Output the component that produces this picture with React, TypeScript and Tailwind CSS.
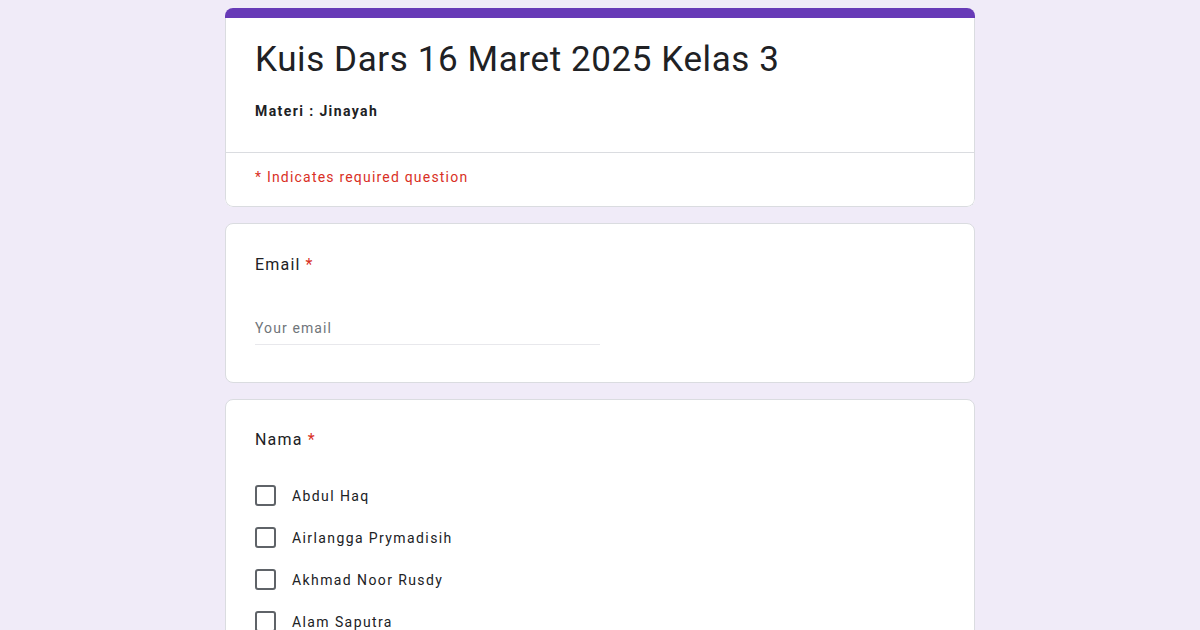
const NAMES = ["Abdul Haq", "Airlangga Prymadisih", "Akhmad Noor Rusdy", "Alam Saputra"]

const Required = () => <span className="ml-[5px] text-[#d93025]">*</span>

export default function App() {
  return (
    <div
      className="h-[630px] overflow-hidden bg-[#f0ebf8] pt-2"
      style={{ fontFamily: "Roboto, 'Noto Sans', sans-serif" }}
    >
      <div className="mx-auto flex w-[750px] flex-col gap-4">
        {/* header card */}
        <div className="overflow-hidden rounded-lg bg-white">
          <div className="h-[10px] bg-[#673ab7]" />
          <div className="rounded-b-lg border border-t-0 border-[#dadce0]">
            <div className="border-b border-[#dadce0] px-[29px] pt-[21px] pb-[31px]">
              <h1 className="text-[35px] leading-[42px] tracking-[0.6px] text-[#202124]">
                Kuis Dars 16 Maret 2025 Kelas 3
              </h1>
              <p className="mt-5 text-[14px] font-bold leading-5 tracking-[1.4px] text-[#202124]">
                Materi : Jinayah
              </p>
            </div>
            <div className="px-[29px] pt-[14px] pb-[19px] text-[14px] leading-5 tracking-[1.2px] text-[#d93025]">
              * Indicates required question
            </div>
          </div>
        </div>

        {/* email card */}
        <div className="rounded-lg border border-[#dadce0] bg-white px-[29px] pt-[29px] pb-[37px]">
          <div className="text-[16px] leading-6 tracking-[1.2px] text-[#202124]">
            Email
            <Required />
          </div>
          <div className="mt-[41px] w-1/2 border-b border-[#e8e8ec] pb-[6px] text-[14px] leading-5 tracking-[1.1px] text-[#70757a]">
            Your email
          </div>
        </div>

        {/* nama card */}
        <div className="rounded-lg border border-[#dadce0] bg-white px-[29px] pt-[28px] pb-6">
          <div className="text-[16px] leading-6 tracking-[1.2px] text-[#202124]">
            Nama
            <Required />
          </div>
          <div className="mt-[33px] flex flex-col gap-[21px]">
            {NAMES.map((name) => (
              <label key={name} className="flex items-center gap-4">
                <span className="h-[21px] w-[21px] rounded-[3px] border-2 border-[#5f6368]" />
                <span className="text-[14px] leading-5 tracking-[1.4px] text-[#202124]">{name}</span>
              </label>
            ))}
          </div>
        </div>
      </div>
    </div>
  )
}
